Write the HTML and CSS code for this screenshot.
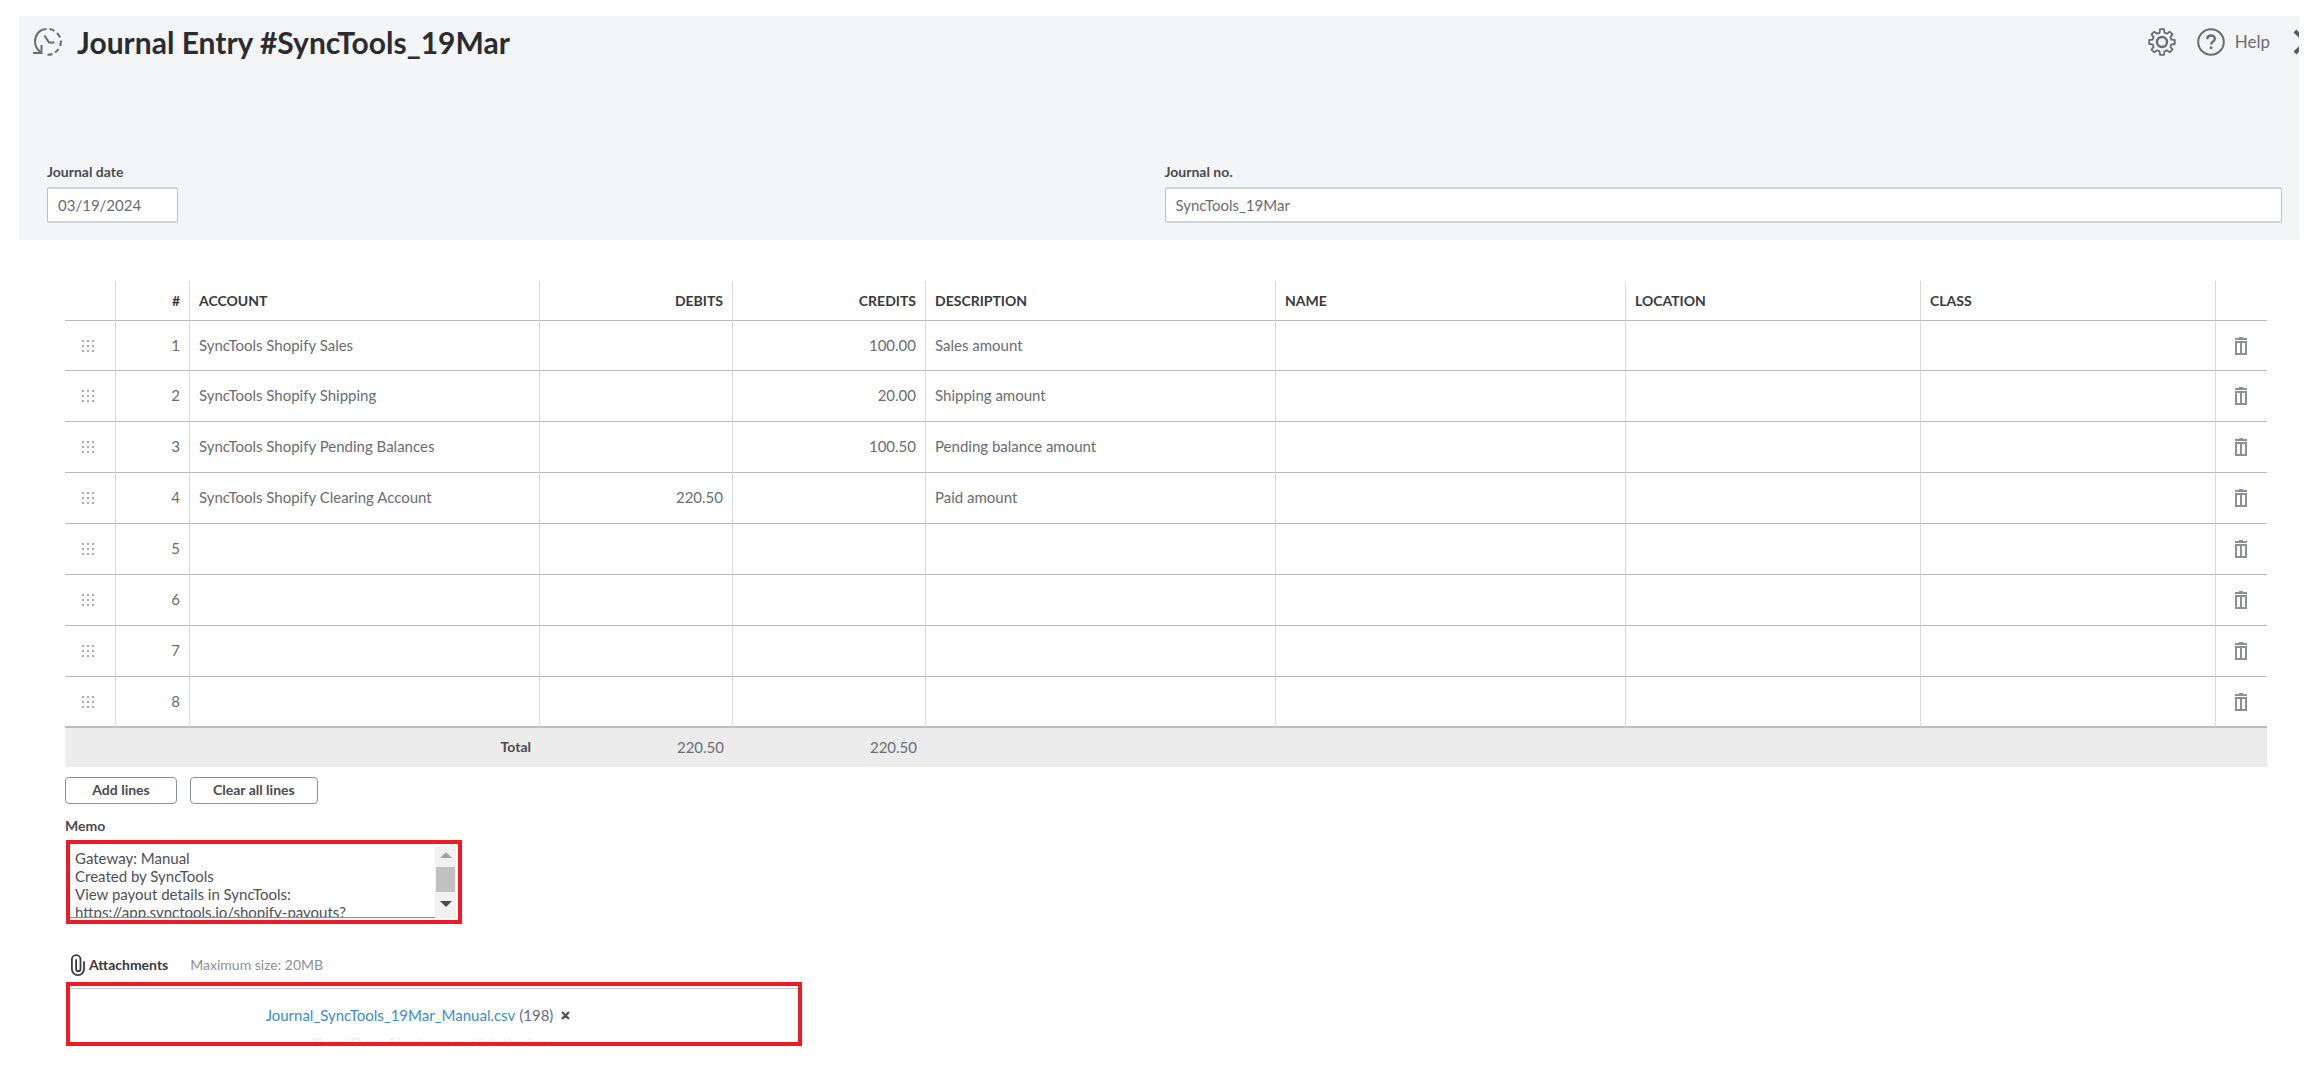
FILE: index.html
```html
<!DOCTYPE html>
<html lang="en">
<head>
<meta charset="utf-8">
<title>Journal Entry #SyncTools_19Mar</title>
<link rel="stylesheet" href="styles.css">
</head>
<body>
<svg class="sprite" aria-hidden="true">
  <symbol id="grip" viewBox="0 0 12 12">
    <path d="M0 0h2v2H0zM5 0h2v2H5zM10 0h2v2h-2zM0 5h2v2H0zM5 5h2v2H5zM10 5h2v2h-2zM0 10h2v2H0zM5 10h2v2H5zM10 10h2v2h-2z" fill="#a9abb0"/>
  </symbol>
  <symbol id="trash" viewBox="0 0 12 18">
    <path d="M4 0h4v1h4v2H0V1h4z" fill="#8d9096"/>
    <path d="M1 5h10v12H1zM6 5v12" fill="none" stroke="#8d9096" stroke-width="2"/>
  </symbol>
</svg>

<header class="entry-head">
  <div class="title-bar">
    <button class="icon-btn" type="button" aria-label="Recent transactions">
      <svg width="30" height="30" viewBox="0 0 30 30" fill="none" stroke="#6b6c72" stroke-width="2">
        <path d="M13.500 2C6 2.500 2 8 2 14.500c0 4 2 8 5.500 10.500"/>
        <path d="M0 26h8.500v-8"/>
        <path d="M16.500 2.100a13 13 0 0 1 5 1.800M24 6a13 13 0 0 1 3 4.500M28 13.500a13 13 0 0 1-1 5.500M25.500 22a13 13 0 0 1-3.500 3.500M19.500 27a13 13 0 0 1-5 .8"/>
        <path d="M11.500 8.500l4.500 7h5.500"/>
      </svg>
    </button>
    <h1 class="title">Journal Entry #SyncTools_19Mar</h1>
    <button class="icon-btn push" type="button" aria-label="Settings">
      <svg width="28" height="28" viewBox="0 0 28 28" fill="none" stroke="#6b6c72" stroke-width="1.800" stroke-linejoin="round">
        <path d="M11.600 4.600L12 1.200h4l.4 3.400 2.600 1.100 2.700-2.100 2.800 2.800-2.100 2.700 1 2.500 3.400.4v4l-3.400.4-1 2.500 2.100 2.700-2.800 2.800-2.700-2.100-2.600 1.100-.4 3.400h-4l-.4-3.400L9 22.300l-2.700 2.100-2.800-2.800 2.100-2.700-1-2.500L1.200 16v-4l3.400-.4 1-2.500-2.100-2.700 2.800-2.800L9 5.700z"/>
        <circle cx="14" cy="14" r="5" stroke-width="2.400"/>
      </svg>
    </button>
    <button class="help-btn" type="button">
      <svg width="28" height="28" viewBox="0 0 28 28" fill="none" stroke="#6b6c72">
        <circle cx="14" cy="14" r="12.800" stroke-width="2"/>
        <path d="M10.300 11.200c0-5 7.500-4.800 7.500-.4 0 2.900-3.700 2.700-3.700 5.700" stroke-width="2.400"/>
        <circle cx="14.100" cy="19.800" r="1.500" fill="#6b6c72" stroke="none"/>
      </svg>
      <span>Help</span>
    </button>
    <button class="close-btn" type="button" aria-label="Close">
      <svg width="26" height="26" viewBox="0 0 26 26" fill="none" stroke="#5a5b60" stroke-width="4"><path d="M2 2l22 22M24 2L2 24"/></svg>
    </button>
  </div>
  <div class="fields">
    <div class="field">
      <label for="jdate">Journal date</label>
      <input class="date" id="jdate" type="text" value="03/19/2024">
    </div>
    <div class="field">
      <label for="jno">Journal no.</label>
      <input id="jno" type="text" value="SyncTools_19Mar">
    </div>
  </div>
</header>

<main class="content">
  <table class="lines">
    <colgroup>
      <col class="c-grip"><col class="c-num"><col class="c-text"><col class="c-amt"><col class="c-amt"><col class="c-text"><col class="c-text"><col class="c-tag"><col class="c-tag"><col class="c-grip">
    </colgroup>
    <thead>
      <tr><th></th><th class="num">#</th><th>ACCOUNT</th><th class="num">DEBITS</th><th class="num">CREDITS</th><th>DESCRIPTION</th><th>NAME</th><th>LOCATION</th><th>CLASS</th><th></th></tr>
    </thead>
    <tbody>
      <tr><td class="grip"><svg width="12" height="12"><use href="#grip"/></svg></td><td class="num">1</td><td>SyncTools Shopify Sales</td><td class="num"></td><td class="num">100.00</td><td>Sales amount</td><td></td><td></td><td></td><td class="del"><button class="icon-btn" type="button" aria-label="Delete line 1"><svg width="12" height="18"><use href="#trash"/></svg></button></td></tr>
      <tr><td class="grip"><svg width="12" height="12"><use href="#grip"/></svg></td><td class="num">2</td><td>SyncTools Shopify Shipping</td><td class="num"></td><td class="num">20.00</td><td>Shipping amount</td><td></td><td></td><td></td><td class="del"><button class="icon-btn" type="button" aria-label="Delete line 2"><svg width="12" height="18"><use href="#trash"/></svg></button></td></tr>
      <tr><td class="grip"><svg width="12" height="12"><use href="#grip"/></svg></td><td class="num">3</td><td>SyncTools Shopify Pending Balances</td><td class="num"></td><td class="num">100.50</td><td>Pending balance amount</td><td></td><td></td><td></td><td class="del"><button class="icon-btn" type="button" aria-label="Delete line 3"><svg width="12" height="18"><use href="#trash"/></svg></button></td></tr>
      <tr><td class="grip"><svg width="12" height="12"><use href="#grip"/></svg></td><td class="num">4</td><td>SyncTools Shopify Clearing Account</td><td class="num">220.50</td><td class="num"></td><td>Paid amount</td><td></td><td></td><td></td><td class="del"><button class="icon-btn" type="button" aria-label="Delete line 4"><svg width="12" height="18"><use href="#trash"/></svg></button></td></tr>
      <tr><td class="grip"><svg width="12" height="12"><use href="#grip"/></svg></td><td class="num">5</td><td></td><td></td><td></td><td></td><td></td><td></td><td></td><td class="del"><button class="icon-btn" type="button" aria-label="Delete line 5"><svg width="12" height="18"><use href="#trash"/></svg></button></td></tr>
      <tr><td class="grip"><svg width="12" height="12"><use href="#grip"/></svg></td><td class="num">6</td><td></td><td></td><td></td><td></td><td></td><td></td><td></td><td class="del"><button class="icon-btn" type="button" aria-label="Delete line 6"><svg width="12" height="18"><use href="#trash"/></svg></button></td></tr>
      <tr><td class="grip"><svg width="12" height="12"><use href="#grip"/></svg></td><td class="num">7</td><td></td><td></td><td></td><td></td><td></td><td></td><td></td><td class="del"><button class="icon-btn" type="button" aria-label="Delete line 7"><svg width="12" height="18"><use href="#trash"/></svg></button></td></tr>
      <tr><td class="grip"><svg width="12" height="12"><use href="#grip"/></svg></td><td class="num">8</td><td></td><td></td><td></td><td></td><td></td><td></td><td></td><td class="del"><button class="icon-btn" type="button" aria-label="Delete line 8"><svg width="12" height="18"><use href="#trash"/></svg></button></td></tr>
    </tbody>
    <tfoot>
      <tr><th class="num" colspan="3" scope="row">Total</th><td class="num">220.50</td><td class="num">220.50</td><td colspan="5"></td></tr>
    </tfoot>
  </table>

  <div class="actions">
    <button class="btn" type="button">Add lines</button>
    <button class="btn" type="button">Clear all lines</button>
  </div>

  <section class="memo">
    <label for="memo">Memo</label>
    <div class="memo-box">
      <textarea id="memo">Gateway: Manual
Created by SyncTools
View payout details in SyncTools:
https://app.synctools.io/shopify-payouts?</textarea>
      <div class="scroll" aria-hidden="true">
        <svg width="12" height="6" viewBox="0 0 12 6"><path d="M0 6l6-6 6 6z" fill="#a3a3a3"/></svg>
        <span class="thumb"></span>
        <svg width="12" height="6" viewBox="0 0 12 6"><path d="M0 0l6 6 6-6z" fill="#4c4c4c"/></svg>
      </div>
    </div>
  </section>

  <section class="attachments">
    <div class="attach-head">
      <svg width="14" height="22" viewBox="0 0 14 22" fill="none" stroke="#393a3d" stroke-width="1.800" stroke-linecap="round">
        <path d="M9.500 6v9a2.200 2.200 0 0 1-4.400 0V6M9.500 15V5.500a4.300 4.300 0 0 0-8.600 0V15a6 6 0 0 0 12.100 0V8"/>
      </svg>
      <h2>Attachments</h2>
      <span class="limit">Maximum size: 20MB</span>
    </div>
    <div class="drop">
      <p class="file"><a href="#">Journal_SyncTools_19Mar_Manual.csv</a> <span>(198)</span>
        <button class="icon-btn" type="button" aria-label="Remove attachment"><svg width="9" height="9" viewBox="0 0 9 9" stroke="#55565b" stroke-width="2.400"><path d="M1 1l7 7M8 1L1 8"/></svg></button></p>
      <p class="hint">Drag/Drop files here or click the icon</p>
    </div>
  </section>
</main>
</body>
</html>
```
FILE: styles.css
```css
* { box-sizing: border-box; }

body {
  margin: 0;
  padding: 16px 25px 0 19px;
  background: #fff;
  color: #6b6c72;
  font: 15px/18px Lato, "Open Sans", sans-serif;
}

button, input, textarea { font: inherit; color: inherit; }
h1, h2, p { margin: 0; }

.sprite { position: absolute; width: 0; height: 0; }

.icon-btn, .help-btn, .close-btn {
  display: flex;
  align-items: center;
  padding: 0;
  border: 0;
  background: none;
}

/* Header */
.entry-head {
  padding: 10px 0 17px 14px;
  background: #f4f5f7;
  overflow: hidden;
}

.title-bar {
  display: flex;
  align-items: center;
  height: 32px;
  margin-bottom: 105px;
}

.title {
  margin-left: 14px;
  color: #2b2c2f;
  font-size: 30px;
  line-height: 32px;
  font-weight: 700;
}

.push { margin-left: auto; }

.help-btn {
  gap: 10px;
  margin-left: 21px;
  font-size: 17px;
}

.close-btn {
  width: 6px;
  margin-left: 23px;
}

.close-btn svg { flex: none; }

.fields {
  display: grid;
  grid-template-columns: 1fr 1fr;
  padding: 0 17px 0 14px;
}

.field {
  display: flex;
  flex-direction: column;
  gap: 6px;
}

label {
  color: #4a4b50;
  font-size: 14px;
  font-weight: 700;
}

.field input {
  width: 100%;
  height: 36px;
  padding: 0 10px;
  border: solid #d2d3d6;
  border-width: 2px 1px;
  border-left-color: #babec5;
  border-right-color: #babec5;
  border-radius: 2px;
  background: #fff;
}

.field .date { width: 131px; }

/* Journal lines */
.content { padding: 41px 34px 0 46px; }

.lines {
  width: 100%;
  table-layout: fixed;
  border-spacing: 0;
}

.c-grip { width: 51px; }
.c-num { width: 74px; }
.c-text { width: 350px; }
.c-amt { width: 193px; }
.c-tag { width: 295px; }

.lines th, .lines td {
  padding: 0 9px;
  text-align: left;
  border-bottom: 1px solid #b9babd;
  border-right: 1px solid #d9dadc;
}

.lines th:last-child, .lines td:last-child { border-right: 0; }
.lines .num { text-align: right; }
.lines thead th { height: 40px; color: #393a3d; font-size: 14px; }
.lines tbody td { height: 51px; padding-bottom: 2px; }
.lines tbody tr:first-child td { height: 50px; }
.lines tbody tr:last-child td { border-bottom: 2px solid #bbbcbe; }

.lines tbody .grip { padding: 0 0 0 17px; }
.lines .grip svg { display: block; }
.lines tbody .del { padding-bottom: 0; }
.lines .del .icon-btn { margin-left: 10px; }

.lines tfoot th, .lines tfoot td {
  height: 39px;
  padding-bottom: 2px;
  border: 0;
  background: #ececec;
}

.lines tfoot th { color: #4a4b50; font-size: 14px; }

/* Buttons under the table */
.actions {
  display: flex;
  gap: 13px;
  margin-top: 10px;
}

.btn {
  height: 27px;
  padding: 0 22px 1px;
  min-width: 112px;
  border: 1px solid #8d9096;
  border-radius: 4px;
  background: #fff;
  color: #4a4b50;
  font-size: 14px;
  font-weight: 700;
}

/* Memo */
.memo { margin-top: 13px; }
.memo label { display: block; }

.memo-box {
  display: flex;
  width: 396px;
  height: 84px;
  margin: 5px 0 0 1px;
  padding: 2px 2px 2px 0;
  border: 4px solid #ed1c24;
}

.memo-box textarea {
  flex: 1;
  padding: 3px 5px 0;
  border: 0;
  border-bottom: 1px solid #8d9096;
  outline: 0;
  resize: none;
  overflow: hidden;
  background: #fff;
  color: #4f5055;
}

.scroll {
  display: flex;
  flex-direction: column;
  align-items: center;
  width: 21px;
  padding: 6px 0 11px;
  gap: 9px;
  background: #f1f1f1;
}

.scroll svg { flex: none; }
.thumb { flex: 1; width: 19px; background: #c1c1c1; }

/* Attachments */
.attachments { margin-top: 30px; }

.attach-head {
  display: flex;
  align-items: center;
  gap: 4px;
  height: 22px;
  padding-left: 6px;
}

.attach-head h2 {
  color: #393a3d;
  font-size: 14px;
  line-height: 18px;
}

.limit { margin-left: 18px; color: #8d9096; font-size: 14px; }

.drop {
  width: 736px;
  height: 64px;
  margin: 6px 0 0 1px;
  padding-top: 2px;
  border: 4px solid #ed1c24;
}

.file {
  display: flex;
  align-items: center;
  justify-content: center;
  gap: 4px;
  padding: 17px 32px 0 0;
  border-top: 1px solid #c7c8cb;
}

.file a { color: #3a8dcc; text-decoration: none; }
.file .icon-btn { margin-left: 4px; }

/* The hint sits behind the frame's bottom edge */
.hint {
  position: relative;
  z-index: -1;
  margin-top: 10px;
  color: #ededef;
  text-align: center;
}
```
